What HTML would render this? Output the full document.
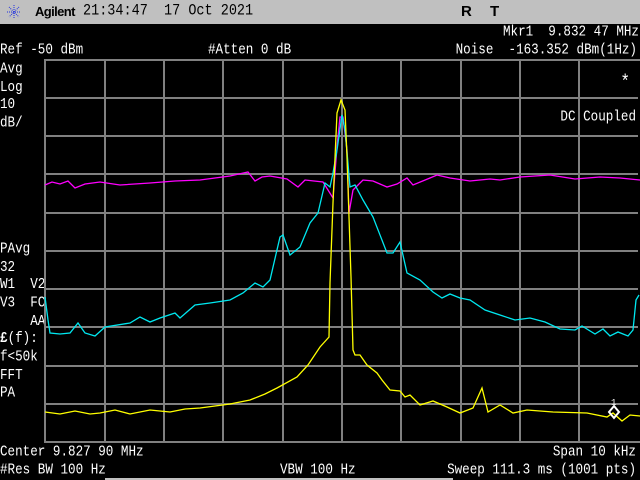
<!DOCTYPE html>
<html><head><meta charset="utf-8"><style>
html,body{margin:0;padding:0;background:#000;}
body{width:640px;height:480px;position:relative;overflow:hidden;font-family:"Liberation Mono",monospace;font-size:12.6px;color:#fff;}
.t{position:absolute;white-space:pre;line-height:1;transform:scaleY(1.15);transform-origin:0 0;}
.r{transform-origin:100% 0;}
#bar{position:absolute;left:0;top:0;width:640px;height:24px;background:#c0c0c0;}
</style></head><body>
<div id="bar"></div>
<svg style="position:absolute;left:6px;top:4px" width="16" height="16" viewBox="0 0 16 16"><g stroke="#2030e0" stroke-width="1" stroke-dasharray="1 1"><line x1="8" y1="1" x2="8" y2="15"/><line x1="1" y1="8" x2="15" y2="8"/><line x1="3" y1="3" x2="13" y2="13"/><line x1="13" y1="3" x2="3" y2="13"/></g></svg>
<div class="t" style="left:35px;top:5px;color:#000;font-family:'Liberation Sans',sans-serif;font-weight:bold;font-size:13px;letter-spacing:-0.6px;transform:none">Agilent</div>
<div class="t" style="left:83px;top:4px;color:#000;font-size:13.5px">21:34:47  17 Oct 2021</div>
<div class="t" style="left:461px;top:4px;color:#000;font-family:'Liberation Sans',sans-serif;font-weight:bold;font-size:15px;transform:none">R</div>
<div class="t" style="left:490px;top:4px;color:#000;font-family:'Liberation Sans',sans-serif;font-weight:bold;font-size:15px;transform:none">T</div>
<div class="t r" style="right:1px;top:25px">Mkr1  9.832 47 MHz</div>
<div class="t" style="left:0;top:43px">Ref -50 dBm</div>
<div class="t" style="left:208px;top:43px">#Atten 0 dB</div>
<div class="t r" style="right:3px;top:43px">Noise  -163.352 dBm(1Hz)</div>
<div class="t" style="left:0;top:61px;line-height:15.65px">Avg
Log
10
dB/</div>
<div class="t" style="left:0;top:241px;line-height:15.65px">PAvg
32
W1  V2
V3  FC
    AA
<b>£</b>(f):
f&lt;50k
FFT
PA</div>
<svg style="position:absolute;left:0;top:0" width="640" height="480">
<g stroke="#808080" stroke-width="2" fill="none">
<path d="M105 60V442M164 60V442M223 60V442M283 60V442M342 60V442M401 60V442M461 60V442M520 60V442M579 60V442M45 98H638M45 136H638M45 174H638M45 213H638M45 251H638M45 289H638M45 327H638M45 366H638M45 404H638"/>
<rect x="45" y="60" width="596" height="382"/>
</g>
<g fill="none" stroke-width="1.3">
<polyline stroke="#ff00ff" points="45,185 52,182 60,184 68,181 75,188 85,184 100,182 120,185 150,183 175,181 200,180 215,178 230,176 248,172 255,181 262,177 270,176 287,179 298,187 305,180 323,182 333,198 337,147 340,117 343,117 347,150 349,213 353,190 363,180 373,181 387,187 397,184 407,178 413,185 430,178 437,175 450,178 470,181 490,179 500,180 520,177 550,175 575,179 600,177 620,178 640,180"/>
<polyline stroke="#00e8f0" points="45,297 48,320 50,333 60,334 70,333 78,323 85,333 95,336 105,327 130,323 140,317 150,322 160,318 175,313 180,318 195,305 210,303 230,300 243,293 255,283 263,287 270,280 280,237 283,235 290,255 300,247 310,223 318,213 325,183 330,187 333,173 337,150 342,115 345,130 347,152 350,187 355,185 363,200 373,217 387,253 393,253 400,242 407,273 420,280 433,292 442,298 450,294 460,298 470,300 485,310 500,315 515,320 530,318 545,322 560,329 575,330 582,326 595,334 603,329 610,336 618,332 628,336 633,330 636,300 639,295"/>
<polyline stroke="#ffff00" points="45,412 60,414 75,411 90,414 100,413 115,410 130,414 150,410 170,412 185,409 200,408 215,406 230,404 250,400 265,394 277,388 297,377 308,365 320,347 329,337 330,283 333,203 337,113 341,100 345,110 347,157 349,217 351,277 353,350 355,355 360,355 367,365 377,373 382,380 390,390 400,391 405,397 410,395 420,405 433,401 447,407 460,413 473,408 482,388 488,412 500,405 513,413 527,410 553,412 587,413 607,417 613,413 622,421 630,415 640,416"/>
</g>
<path d="M614 406L619 412L614 418L609 412Z" fill="none" stroke="#fff" stroke-width="2"/>
<text x="611" y="405" fill="#fff" font-family="Liberation Mono" font-size="9">1</text>
</svg>
<div class="t r" style="right:10px;top:73px;font-size:16px">*</div>
<div class="t r" style="right:4px;top:110px">DC Coupled</div>
<div class="t" style="left:0;top:445px">Center 9.827 90 MHz</div>
<div class="t r" style="right:4px;top:445px">Span 10 kHz</div>
<div class="t" style="left:0;top:463px">#Res BW 100 Hz</div>
<div class="t" style="left:280px;top:463px">VBW 100 Hz</div>
<div class="t r" style="right:4px;top:463px">Sweep 111.3 ms (1001 pts)</div>
<div style="position:absolute;left:105px;top:478px;width:348px;height:2px;background:#c0c0c0"></div>
</body></html>
